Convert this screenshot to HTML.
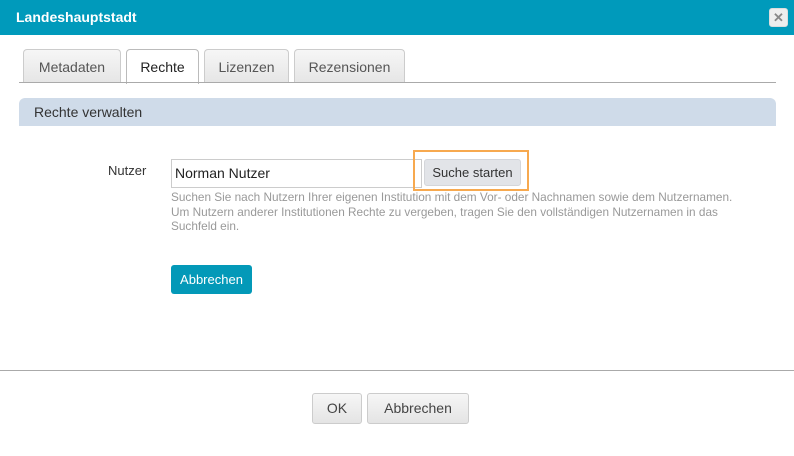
<!DOCTYPE html>
<html><head><style>
body{margin:0;width:794px;height:456px;background:#fff;font-family:"Liberation Sans",sans-serif;position:relative;overflow:hidden}
.a{position:absolute}
.title{left:0;top:0;width:794px;height:35px;background:#009abb;}
.title span{position:absolute;left:16px;top:9px;color:#fff;font-weight:bold;font-size:14px}
.close{left:769px;top:8px;width:19px;height:19px;background:#eee;border-radius:3px;border:1px solid #ddd;box-sizing:border-box;color:#888;font-size:13px;line-height:17px;text-align:center;font-weight:bold}
.tab{top:49px;height:33px;background:linear-gradient(#f6f6f6,#e6e6e6);border:1px solid #ccc;border-bottom:none;border-radius:4px 4px 0 0;box-sizing:border-box;color:#555;font-size:14px;text-align:center;line-height:34px}
.tab.on{background:#fff;color:#222;height:35px;border-color:#bbb}
.line{left:19px;top:82px;width:757px;height:1px;background:#aaa}
.sec{left:19px;top:98px;width:757px;height:28px;background:#cfdbe9;border-radius:6px 6px 0 0;color:#333;font-size:14px;line-height:28px;padding-left:15px;box-sizing:border-box}
.btn{border:1px solid #ccc;border-radius:3px;background:linear-gradient(#f6f6f6,#e4e4e4);box-sizing:border-box;text-align:center;color:#444;font-size:14px}
.help div{white-space:nowrap}
</style></head><body>
<div class="a title"><span>Landeshauptstadt</span></div>
<div class="a close">✕</div>
<div class="a tab" style="left:23px;width:98px">Metadaten</div>
<div class="a tab on" style="left:126px;width:73px">Rechte</div>
<div class="a tab" style="left:204px;width:85px">Lizenzen</div>
<div class="a tab" style="left:294px;width:111px">Rezensionen</div>
<div class="a line"></div>
<div class="a sec">Rechte verwalten</div>
<div class="a" style="left:108px;top:163px;font-size:13px;color:#333">Nutzer</div>
<div class="a" style="left:171px;top:159px;width:251px;height:29px;border:1px solid #ccc;box-sizing:border-box;font-size:14px;line-height:27px;padding-left:3px;color:#222">Norman Nutzer</div>
<div class="a" style="left:424px;top:159px;width:97px;height:27px;background:#e2e4e8;border:1px solid #d4d6da;border-radius:3px;box-sizing:border-box;font-size:13px;line-height:25px;text-align:center;color:#333">Suche starten</div>
<div class="a" style="left:413px;top:150px;width:116px;height:41px;border:2px solid #f7a94f;box-sizing:border-box"></div>
<div class="a help" style="left:171px;top:190px;font-size:11.8px;line-height:14.5px;color:#999">
<div>Suchen Sie nach Nutzern Ihrer eigenen Institution mit dem Vor- oder Nachnamen sowie dem Nutzernamen.</div>
<div>Um Nutzern anderer Institutionen Rechte zu vergeben, tragen Sie den vollständigen Nutzernamen in das</div>
<div>Suchfeld ein.</div></div>
<div class="a" style="left:171px;top:265px;width:81px;height:29px;background:#0399b8;border-radius:3px;color:#fff;font-size:13px;line-height:29px;text-align:center">Abbrechen</div>
<div class="a" style="left:0;top:370px;width:794px;height:1px;background:#aaa"></div>
<div class="a btn" style="left:312px;top:393px;width:50px;height:31px;line-height:29px">OK</div>
<div class="a btn" style="left:367px;top:393px;width:102px;height:31px;line-height:29px">Abbrechen</div>
</body></html>
